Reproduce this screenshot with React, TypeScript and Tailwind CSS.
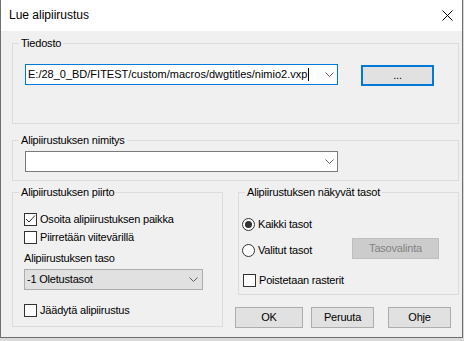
import React from 'react';

const Chevron: React.FC = () => (
  <svg width="9" height="5" viewBox="0 0 9 5" className="shrink-0">
    <polyline points="0.5,0.5 4.5,4.5 8.5,0.5" fill="none" stroke="#606060" strokeWidth="1" />
  </svg>
);

const CheckBox: React.FC<{ label: string; checked?: boolean; className?: string }> = ({ label, checked, className = '' }) => (
  <div className={`flex items-center h-[13px] gap-[3px] ${className}`}>
    <div className="w-[13px] h-[13px] bg-white border border-[#333333] shrink-0 flex items-center justify-center">
      {checked && (
        <svg width="11" height="11" viewBox="0 0 11 11">
          <polyline points="1,5 4,8 10,1.5" fill="none" stroke="#333333" strokeWidth="1" />
        </svg>
      )}
    </div>
    <span className="leading-[13px] whitespace-nowrap">{label}</span>
  </div>
);

const Radio: React.FC<{ label: string; checked?: boolean; className?: string }> = ({ label, checked, className = '' }) => (
  <div className={`flex items-center h-[13px] gap-[3px] ${className}`}>
    <div className="w-[13px] h-[13px] rounded-full bg-white border border-[#333333] shrink-0 flex items-center justify-center">
      {checked && <div className="w-[7px] h-[7px] rounded-full bg-[#333333]" />}
    </div>
    <span className="leading-[13px] whitespace-nowrap">{label}</span>
  </div>
);

const Button: React.FC<{ label: string; className?: string }> = ({ label, className = '' }) => (
  <div className={`h-[21px] bg-[#e1e1e1] border border-[#adadad] flex items-center justify-center ${className}`}>
    {label}
  </div>
);

const Legend: React.FC<{ text: string }> = ({ text }) => (
  <legend className="ml-[6px] px-[2px] leading-[13px]">{text}</legend>
);

export default function App() {
  return (
    <div className="w-[464px] h-[341px] bg-[#d9d9d9] font-['Liberation_Sans',Arial,sans-serif] text-[11px] tracking-[-0.2px] text-black">
      <div className="w-[463px] h-[338px] border-l border-r border-b border-[#6f6f6f] bg-[#f0f0f0] flex flex-col">
        {/* title bar */}
        <div className="h-[31px] bg-white flex items-center justify-between pl-[8px] pr-[8px] shrink-0">
          <span className="text-[12px] tracking-normal pb-[1px]">Lue alipiirustus</span>
          <svg width="11" height="11" viewBox="0 0 11 11" className="mr-[1px] mb-[1px]">
            <line x1="0.5" y1="0.5" x2="10.5" y2="10.5" stroke="#000" strokeWidth="1" />
            <line x1="10.5" y1="0.5" x2="0.5" y2="10.5" stroke="#000" strokeWidth="1" />
          </svg>
        </div>

        <div className="pl-[11px] pt-[6px] flex flex-col">
          {/* Tiedosto */}
          <fieldset className="w-[447px] h-[87px] border border-[#dcdcdc]">
            <Legend text="Tiedosto" />
            <div className="flex items-start">
              <div className="ml-[12px] mt-[14px] w-[313px] h-[21px] bg-white border border-[#0078d7] flex items-center pl-[2px] pr-[3px]">
                <span className="tracking-normal whitespace-nowrap">E:/28_0_BD/FITEST/custom/macros/dwgtitles/nimio2.vxp</span>
                <span className="w-[1px] h-[13px] bg-black ml-[1px]" />
                <div className="ml-auto">
                  <Chevron />
                </div>
              </div>
              <div className="ml-[23px] mt-[15px] w-[73px] h-[21px] bg-[#e1e1e1] border-2 border-[#0078d7] flex items-center justify-center">
                ...
              </div>
            </div>
          </fieldset>

          {/* Alipiirustuksen nimitys */}
          <fieldset className="mt-[10px] w-[447px] h-[47px] border border-[#dcdcdc]">
            <Legend text="Alipiirustuksen nimitys" />
            <div className="ml-[12px] mt-[4px] w-[313px] h-[21px] bg-white border border-[#7a7a7a] flex items-center justify-end pr-[3px]">
              <Chevron />
            </div>
          </fieldset>

          <div className="mt-[5px] flex items-start">
            {/* Alipiirustuksen piirto */}
            <fieldset className="w-[211px] h-[141px] border border-[#dcdcdc]">
              <Legend text="Alipiirustuksen piirto" />
              <div className="flex flex-col pl-[11px]">
                <CheckBox label="Osoita alipiirustuksen paikka" checked className="mt-[14px]" />
                <CheckBox label="Piirretään viitevärillä" className="mt-[5px]" />
                <span className="mt-[8px] leading-[13px]">Alipiirustuksen taso</span>
                <div className="mt-[4px] w-[179px] h-[21px] bg-[#e1e1e1] border border-[#adadad] flex items-center justify-between pl-[2px] pr-[4px]">
                  <span>-1 Oletustasot</span>
                  <Chevron />
                </div>
                <CheckBox label="Jäädytä alipiirustus" className="mt-[14px]" />
              </div>
            </fieldset>

            <div className="ml-[12px] flex flex-col">
              {/* Alipiirustuksen näkyvät tasot */}
              <fieldset className="ml-[3px] w-[221px] h-[109px] border border-[#dcdcdc]">
                <Legend text="Alipiirustuksen näkyvät tasot" />
                <div className="flex flex-col">
                  <Radio label="Kaikki tasot" checked className="mt-[19px] ml-[3px]" />
                  <div className="mt-[7px] flex items-start">
                    <Radio label="Valitut tasot" className="mt-[6px] ml-[3px]" />
                    <div className="ml-auto mr-[19px] w-[87px] h-[21px] bg-[#cccccc] border border-[#bfbfbf] text-[#838383] flex items-center justify-center">
                      Tasovalinta
                    </div>
                  </div>
                  <CheckBox label="Poistetaan rasterit" className="mt-[15px] ml-[4px]" />
                </div>
              </fieldset>
              <div className="mt-[12px] flex">
                <Button label="OK" className="w-[68px]" />
                <Button label="Peruuta" className="ml-[8px] w-[63px]" />
                <Button label="Ohje" className="ml-[14px] w-[63px]" />
              </div>
            </div>
          </div>
        </div>
      </div>
    </div>
  );
}
